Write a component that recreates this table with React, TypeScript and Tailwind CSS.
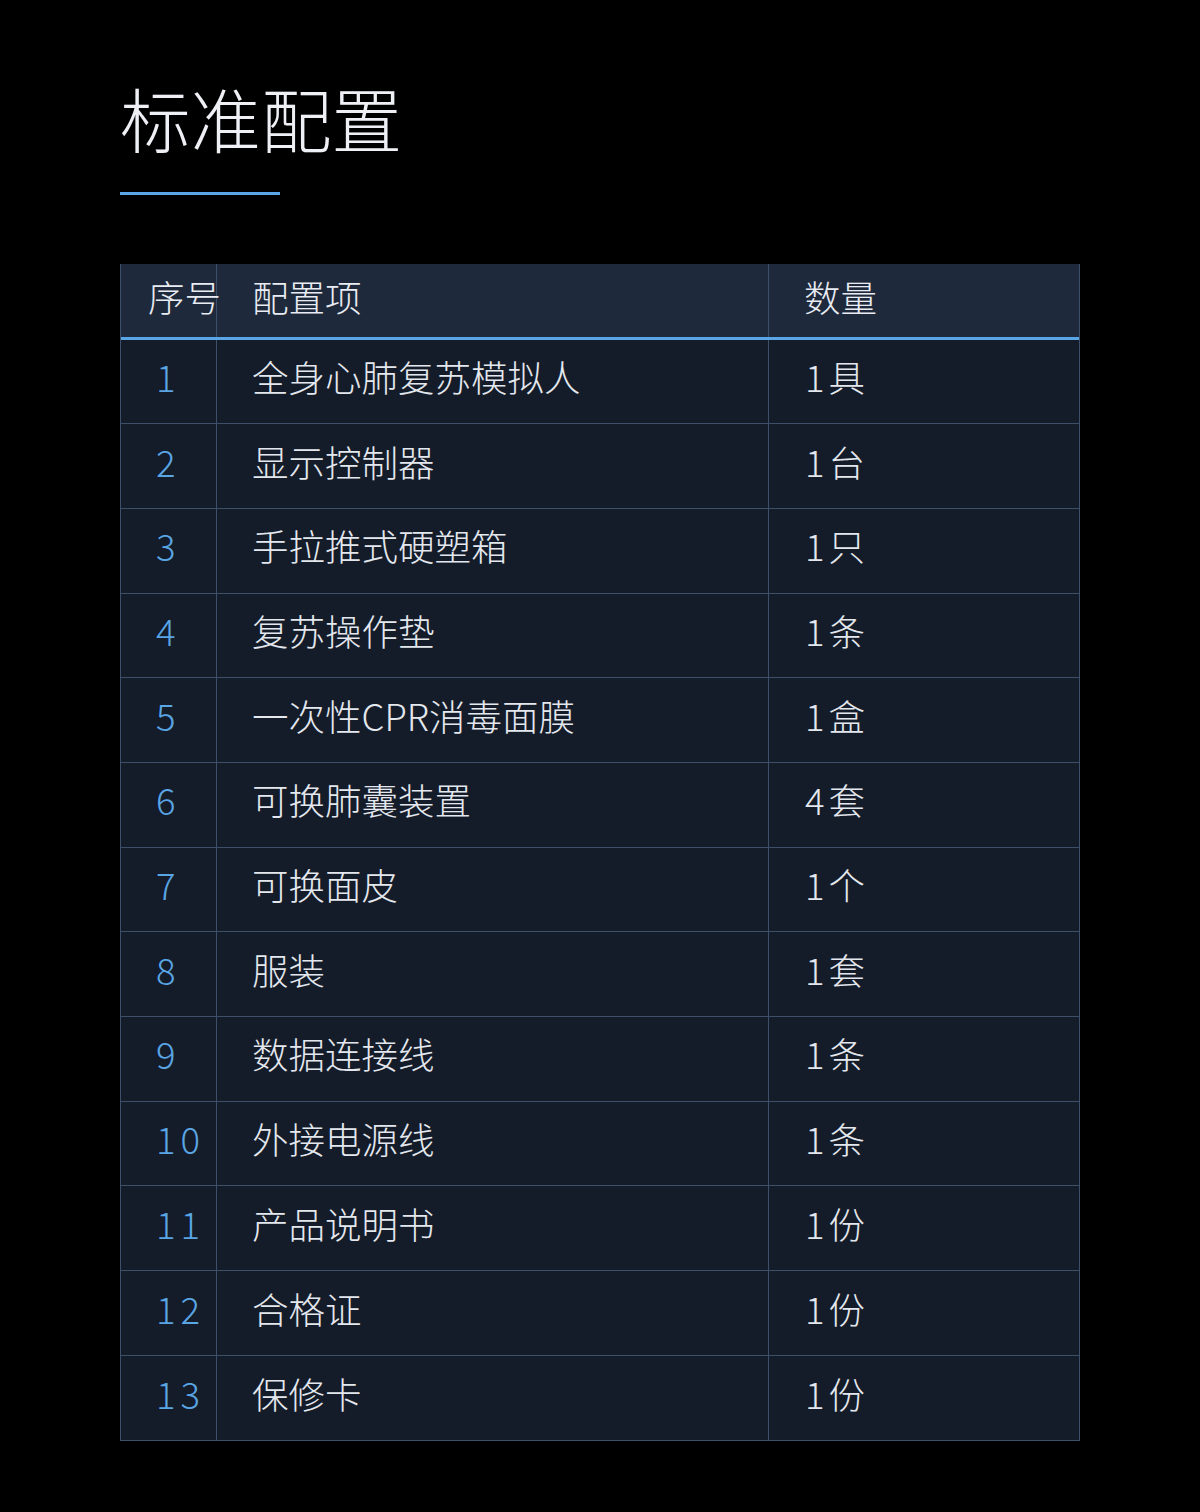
import React from "react";

const rows = [
  { no: "1", name: "全身心肺复苏模拟人", qty: "1具" },
  { no: "2", name: "显示控制器", qty: "1台" },
  { no: "3", name: "手拉推式硬塑箱", qty: "1只" },
  { no: "4", name: "复苏操作垫", qty: "1条" },
  { no: "5", name: "一次性CPR消毒面膜", qty: "1盒" },
  { no: "6", name: "可换肺囊装置", qty: "4套" },
  { no: "7", name: "可换面皮", qty: "1个" },
  { no: "8", name: "服装", qty: "1套" },
  { no: "9", name: "数据连接线", qty: "1条" },
  { no: "10", name: "外接电源线", qty: "1条" },
  { no: "11", name: "产品说明书", qty: "1份" },
  { no: "12", name: "合格证", qty: "1份" },
  { no: "13", name: "保修卡", qty: "1份" },
];

const font = {
  fontFamily: '"Noto Sans CJK SC", "Noto Sans", sans-serif',
};

export default function App() {
  return (
    <div className="w-[1200px] min-h-[1512px] bg-black font-light" style={font}>
      {/* Title */}
      <div className="px-[120px] pt-[82px]">
        <h1 className="text-[70.5px] leading-none font-light text-[#eef0f5]">
          标准配置
        </h1>
        <div className="mt-[39px] w-[160px] h-[3px] bg-[#5aa5e6]" />
      </div>

      {/* Table */}
      <div className="mx-[120px] mt-[69px] border-x border-b border-[#3d4f69]">
        {/* Header */}
        <div className="grid grid-cols-[96px_552px_310px] h-[76px] bg-[#1e293b] text-[#e9ecf2] text-[36.5px] border-b-[3px] border-[#5aa5e6]">
          <div className="flex items-center pl-[27px] pb-[5px] whitespace-nowrap border-r border-[#3d4f69]">
            序号
          </div>
          <div className="flex items-center pl-[35px] pb-[5px] border-r border-[#3d4f69]">
            配置项
          </div>
          <div className="flex items-center pl-[35px] pb-[5px]">数量</div>
        </div>

        {/* Body */}
        {rows.map((r, i) => (
          <div
            key={r.no}
            className={
              "grid grid-cols-[96px_552px_310px] h-[84.7px] bg-[#141c2a] text-[36.5px] " +
              (i < rows.length - 1 ? "border-b border-[#3d4f69]" : "")
            }
          >
            <div className="flex items-center pl-[35px] pb-[8px] text-[#5aa5e3] tracking-[5px] border-r border-[#3d4f69]">
              {r.no}
            </div>
            <div className="flex items-center pl-[35px] pb-[8px] text-[#e4e8ee] border-r border-[#3d4f69]">
              {r.name}
            </div>
            <div className="flex items-center pl-[36px] pb-[8px] text-[#e4e8ee]">
              <span className="mr-[4px]">{r.qty.slice(0, 1)}</span>
              {r.qty.slice(1)}
            </div>
          </div>
        ))}
      </div>
    </div>
  );
}
